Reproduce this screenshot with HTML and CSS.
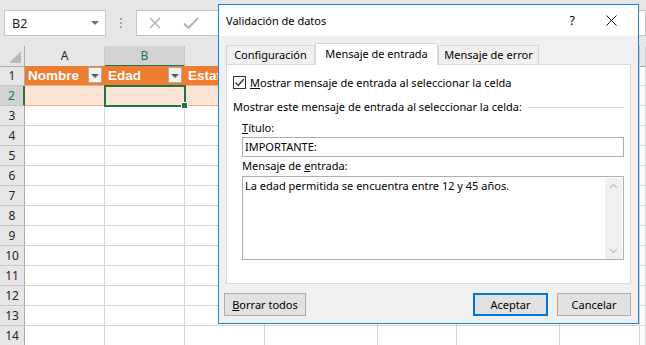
FILE: index.html
```html
<!DOCTYPE html>
<html lang="es">
<head>
    <meta charset="UTF-8">
    <title>Validación de datos</title>
    <link rel="stylesheet" href="styles.css">
</head>
<body>
    <div class="toolbar">
        <div class="namebox"><span>B2</span><span class="caret"></span></div>
        <div class="grip"><i></i><i></i><i></i></div>
        <div class="formula">
            <svg class="fx-icon" width="12" height="12" viewBox="0 0 12 12"><path d="M1 1 L11 11 M11 1 L1 11" stroke="#b4b4b4" stroke-width="1.6" fill="none"/></svg>
            <svg class="fx-icon" width="16" height="12" viewBox="0 0 16 12"><path d="M1 6.5 L5.5 11 L15 1" stroke="#b4b4b4" stroke-width="2" fill="none"/></svg>
        </div>
    </div>

    <div class="sheet">
        <!-- headers C..G sit under the dialog, so they carry no letters -->
        <div class="row head">
            <div class="corner"></div>
            <div class="ch">A</div>
            <div class="ch sel">B</div>
            <div class="ch"></div>
            <div class="ch"></div>
            <div class="ch"></div>
            <div class="ch"></div>
            <div class="ch"></div>
            <div class="ch"></div>
        </div>
        <div class="row">
            <div class="rh">1</div>
            <div class="cell th">Nombre<span class="filter"></span></div>
            <div class="cell th">Edad<span class="filter"></span></div>
            <div class="cell th">Estat</div>
            <div class="cell"></div><div class="cell"></div><div class="cell"></div><div class="cell"></div><div class="cell"></div>
        </div>
        <div class="row">
            <div class="rh sel">2</div>
            <div class="cell band"></div>
            <div class="cell band active"><span class="handle"></span></div>
            <div class="cell band"></div>
            <div class="cell"></div><div class="cell"></div><div class="cell"></div><div class="cell"></div><div class="cell"></div>
        </div>
        <div class="row"><div class="rh">3</div><div class="cell"></div><div class="cell"></div><div class="cell"></div><div class="cell"></div><div class="cell"></div><div class="cell"></div><div class="cell"></div><div class="cell"></div></div>
        <div class="row"><div class="rh">4</div><div class="cell"></div><div class="cell"></div><div class="cell"></div><div class="cell"></div><div class="cell"></div><div class="cell"></div><div class="cell"></div><div class="cell"></div></div>
        <div class="row"><div class="rh">5</div><div class="cell"></div><div class="cell"></div><div class="cell"></div><div class="cell"></div><div class="cell"></div><div class="cell"></div><div class="cell"></div><div class="cell"></div></div>
        <div class="row"><div class="rh">6</div><div class="cell"></div><div class="cell"></div><div class="cell"></div><div class="cell"></div><div class="cell"></div><div class="cell"></div><div class="cell"></div><div class="cell"></div></div>
        <div class="row"><div class="rh">7</div><div class="cell"></div><div class="cell"></div><div class="cell"></div><div class="cell"></div><div class="cell"></div><div class="cell"></div><div class="cell"></div><div class="cell"></div></div>
        <div class="row"><div class="rh">8</div><div class="cell"></div><div class="cell"></div><div class="cell"></div><div class="cell"></div><div class="cell"></div><div class="cell"></div><div class="cell"></div><div class="cell"></div></div>
        <div class="row"><div class="rh">9</div><div class="cell"></div><div class="cell"></div><div class="cell"></div><div class="cell"></div><div class="cell"></div><div class="cell"></div><div class="cell"></div><div class="cell"></div></div>
        <div class="row"><div class="rh">10</div><div class="cell"></div><div class="cell"></div><div class="cell"></div><div class="cell"></div><div class="cell"></div><div class="cell"></div><div class="cell"></div><div class="cell"></div></div>
        <div class="row"><div class="rh">11</div><div class="cell"></div><div class="cell"></div><div class="cell"></div><div class="cell"></div><div class="cell"></div><div class="cell"></div><div class="cell"></div><div class="cell"></div></div>
        <div class="row"><div class="rh">12</div><div class="cell"></div><div class="cell"></div><div class="cell"></div><div class="cell"></div><div class="cell"></div><div class="cell"></div><div class="cell"></div><div class="cell"></div></div>
        <div class="row"><div class="rh">13</div><div class="cell"></div><div class="cell"></div><div class="cell"></div><div class="cell"></div><div class="cell"></div><div class="cell"></div><div class="cell"></div><div class="cell"></div></div>
        <div class="row"><div class="rh">14</div><div class="cell"></div><div class="cell"></div><div class="cell"></div><div class="cell"></div><div class="cell"></div><div class="cell"></div><div class="cell"></div><div class="cell"></div></div>
    </div>

    <!-- dialog floats over the sheet -->
    <div class="dialog">
        <div class="titlebar">
            <span class="title">Validación de datos</span>
            <span class="help">?</span>
            <svg class="close" width="11" height="11" viewBox="0 0 11 11"><path d="M0.5 0.5 L10.5 10.5 M10.5 0.5 L0.5 10.5" stroke="#1a1a1a" stroke-width="1" fill="none"/></svg>
        </div>
        <div class="dbody">
            <div class="tabs">
                <div class="tab tab-config">Configuración</div>
                <div class="tab tab-input active">Mensaje de entrada</div>
                <div class="tab tab-error">Mensaje de error</div>
            </div>
            <div class="panel">
                <div class="check">
                    <span class="box"><svg width="11" height="11" viewBox="0 0 11 11"><path d="M1.5 5.5 L4.3 8.5 L9.8 2" stroke="#333" stroke-width="1.3" fill="none"/></svg></span>
                    <span><u>M</u>ostrar mensaje de entrada al seleccionar la celda</span>
                </div>
                <div class="group">
                    <span>Mostrar este mensaje de entrada al seleccionar la celda:</span>
                    <span class="rule"></span>
                </div>
                <div class="field-label"><u>T</u>ítulo:</div>
                <div class="input">IMPORTANTE:</div>
                <div class="field-label label-msg">Mensaje de <u>e</u>ntrada:</div>
                <div class="textarea">
                    <span class="text">La edad permitida se encuentra entre 12 y 45 años.</span>
                    <div class="scroll">
                        <svg width="9" height="6" viewBox="0 0 9 6"><path d="M1 5 L4.5 1.5 L8 5" stroke="#c2c2c2" stroke-width="1.3" fill="none"/></svg>
                        <svg width="9" height="6" viewBox="0 0 9 6"><path d="M1 1 L4.5 4.5 L8 1" stroke="#c2c2c2" stroke-width="1.3" fill="none"/></svg>
                    </div>
                </div>
            </div>
            <div class="buttons">
                <button class="btn btn-clear"><u>B</u>orrar todos</button>
                <span class="spacer"></span>
                <button class="btn btn-ok">Aceptar</button>
                <button class="btn btn-cancel">Cancelar</button>
            </div>
        </div>
    </div>
</body>
</html>
```

FILE: styles.css
```css
body {
    margin: 0;
    width: 646px;
    height: 345px;
    overflow: hidden;
    background-color: #FFFFFF;
    font-family: "Noto Sans", sans-serif;
    color: #1e1e1e;
    position: relative;
}

/* formula bar strip */
.toolbar {
    height: 46px;
    background-color: #E6E6E6;
    display: flex;
    align-items: flex-start;
    padding-top: 10px;
    box-sizing: border-box;
}
.namebox {
    margin-left: 4px;
    width: 102px;
    height: 26px;
    box-sizing: border-box;
    background-color: #FFFFFF;
    border: 1px solid #C6C6C6;
    display: flex;
    align-items: center;
    justify-content: space-between;
    padding: 0 6px 0 7px;
    font-size: 12.5px;
}
.caret {
    width: 0;
    height: 0;
    border-left: 4px solid transparent;
    border-right: 4px solid transparent;
    border-top: 4px solid #707070;
}
.grip {
    width: 30px;
    height: 26px;
    display: flex;
    flex-direction: column;
    align-items: center;
    justify-content: center;
    gap: 2px;
}
.grip i {
    width: 2px;
    height: 2px;
    background-color: #A6A6A6;
}
.formula {
    flex: 1;
    height: 26px;
    box-sizing: border-box;
    background-color: #FFFFFF;
    border: 1px solid #C6C6C6;
    display: flex;
    align-items: center;
    gap: 22px;
    padding-left: 12px;
}

/* grid */
.row {
    display: grid;
    grid-template-columns: 25px 80px 80px 80px 113px 79px 103px 80px 1fr;
    height: 20px;
}
.cell {
    border-right: 1px solid #D4D4D4;
    border-bottom: 1px solid #D4D4D4;
    position: relative;
}
.rh {
    background-color: #E6E6E6;
    border-right: 1px solid #ABABAB;
    border-bottom: 1px solid #C8C8C8;
    font-size: 12px;
    line-height: 19px;
    text-align: center;
    color: #262626;
}
.rh.sel {
    background-color: #D2D2D2;
    color: #217346;
    border-right: 2px solid #217346;
}
.head .corner {
    background-color: #E6E6E6;
    border-right: 1px solid #ABABAB;
    border-bottom: 1px solid #ABABAB;
    position: relative;
}
.head .corner::after {
    content: "";
    position: absolute;
    right: 3px;
    bottom: 3px;
    border-left: 12px solid transparent;
    border-bottom: 12px solid #B9B9B9;
}
.ch {
    background-color: #E6E6E6;
    border-right: 1px solid #C8C8C8;
    border-bottom: 1px solid #ABABAB;
    font-size: 12px;
    line-height: 19px;
    text-align: center;
    color: #262626;
}
.ch.sel {
    background-color: #D2D2D2;
    color: #217346;
    border-bottom: 2px solid #217346;
}

.cell.th {
    background-color: #ED7D31;
    border-right-color: #ED7D31;
    border-bottom-color: #F4B084;
    color: #FFFFFF;
    font-family: "Liberation Sans", sans-serif;
    font-weight: bold;
    font-size: 13.5px;
    line-height: 19px;
    padding-left: 3px;
    white-space: nowrap;
    overflow: hidden;
}
.filter {
    position: absolute;
    right: 2px;
    top: 1px;
    width: 14px;
    height: 16px;
    box-sizing: border-box;
    background-color: #F3F3F3;
    border: 1px solid #ABABAB;
}
.filter::after {
    content: "";
    position: absolute;
    left: 2px;
    top: 6px;
    border-left: 4px solid transparent;
    border-right: 4px solid transparent;
    border-top: 4px solid #5F5F5F;
}
.cell.band {
    background-color: #FCE4D6;
    border-right-color: #FCE4D6;
    border-bottom-color: #F4B084;
}
.cell.active {
    outline: 2px solid #217346;
    outline-offset: -1px;
    z-index: 1;
}
.handle {
    position: absolute;
    right: -4px;
    bottom: -4px;
    width: 5px;
    height: 5px;
    background-color: #217346;
    border: 1px solid #FFFFFF;
}

/* dialog */
.dialog {
    position: absolute;
    left: 218px;
    top: 4px;
    width: 421px;
    height: 320px;
    box-sizing: border-box;
    border: 1px solid #1883D7;
    background-color: #F0F0F0;
    font-family: "Noto Sans", sans-serif;
    font-size: 11px;
    color: #000000;
    z-index: 5;
}
.titlebar {
    height: 31px;
    background-color: #FFFFFF;
    display: flex;
    align-items: center;
    padding-left: 7px;
}
.title {
    flex: 1;
}
.help {
    font-size: 12.5px;
    margin-right: 31px;
}
.close {
    margin-right: 21px;
}
.dbody {
    padding: 7px 7px 0 7px;
}
.tabs {
    display: flex;
    align-items: flex-end;
    height: 21px;
    position: relative;
    z-index: 2;
}
.tab {
    height: 19px;
    box-sizing: border-box;
    border: 1px solid #D9D9D9;
    border-bottom: none;
    line-height: 18px;
    text-align: center;
    white-space: nowrap;
}
.tab-config { width: 89px; }
.tab-input { width: 123px; }
.tab-error { width: 101px; }
.tab.active {
    height: 22px;
    margin-bottom: -1px;
    background-color: #FFFFFF;
    line-height: 19px;
}
.panel {
    height: 220px;
    box-sizing: border-box;
    background-color: #FFFFFF;
    border: 1px solid #D9D9D9;
    padding: 11px 6px 0 6px;
}
.check {
    display: flex;
    align-items: center;
    gap: 4px;
    height: 13px;
}
.box {
    width: 13px;
    height: 13px;
    box-sizing: border-box;
    border: 1px solid #333333;
    display: flex;
    align-items: center;
    justify-content: center;
}
.group {
    display: flex;
    align-items: center;
    margin-top: 10px;
    line-height: 16px;
}
.rule {
    flex: 1;
    height: 1px;
    background-color: #DCDCDC;
    margin-left: 6px;
}
.field-label {
    margin: 5px 0 1px 9px;
    line-height: 16px;
}
.label-msg {
    margin-top: 1px;
    margin-bottom: 2px;
}
.input {
    margin-left: 9px;
    height: 20px;
    box-sizing: border-box;
    border: 1px solid #ABADB3;
    padding-left: 2px;
    line-height: 18px;
}
.textarea {
    margin-left: 9px;
    height: 84px;
    box-sizing: border-box;
    border: 1px solid #ABADB3;
    display: flex;
}
.textarea .text {
    flex: 1;
    padding: 1px 0 0 2px;
    line-height: 16px;
}
.scroll {
    width: 17px;
    margin: 1px 1px 0 0;
    background-color: #F0F0F0;
    display: flex;
    flex-direction: column;
    justify-content: space-between;
    align-items: center;
    padding: 5px 0 5px 0;
    box-sizing: border-box;
}
.buttons {
    display: flex;
    margin-top: 9px;
    gap: 9px;
}
.spacer {
    flex: 1;
}
.btn {
    height: 23px;
    box-sizing: border-box;
    background-color: #E1E1E1;
    border: 1px solid #ADADAD;
    font-family: "Noto Sans", sans-serif;
    font-size: 11px;
    color: #000000;
    padding: 0;
}
.btn-clear { width: 82px; margin-left: -2px; }
.btn-ok { width: 75px; border: 2px solid #0078D7; }
.btn-cancel { width: 74px; }
```
